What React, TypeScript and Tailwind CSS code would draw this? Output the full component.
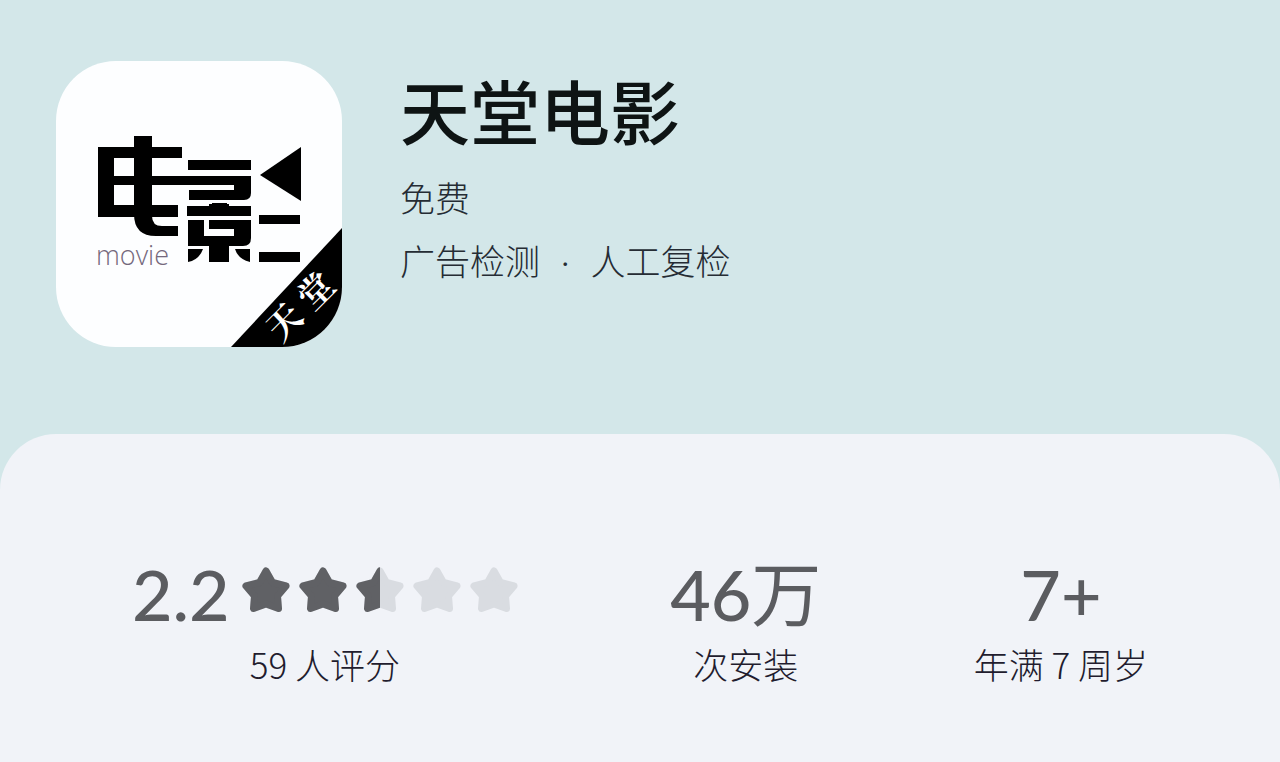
import { ReactNode } from 'react';

const STAR_PATH =
  'M24 5L30.5 16.5L44 20L35.5 30L36.5 42.5L24 38L11.5 42.5L12.5 30L4 20L17.5 16.5Z';

function Star({ fill }: { fill: number }) {
  return (
    <span className="relative block w-12 h-12">
      <svg viewBox="0 0 48 48" className="w-12 h-12 text-[#d9dce1]" aria-hidden="true">
        <path d={STAR_PATH} fill="currentColor" stroke="currentColor" strokeWidth="7" strokeLinejoin="round" />
      </svg>
      {/* Filled part */}
      <span className="absolute inset-y-0 left-0 overflow-hidden" style={{ width: `${fill * 100}%` }}>
        <svg viewBox="0 0 48 48" className="w-12 h-12 max-w-none text-[#606165]" aria-hidden="true">
          <path d={STAR_PATH} fill="currentColor" stroke="currentColor" strokeWidth="7" strokeLinejoin="round" />
        </svg>
      </span>
    </span>
  );
}

function AppIcon() {
  return (
    <div className="w-[286px] h-[286px] shrink-0 rounded-[60px] bg-[#fdfeff]">
      <svg viewBox="0 0 286 286" className="w-full h-full overflow-visible" role="img" aria-label="天堂电影">
        {/* Left half of the mark */}
        <rect x="42" y="86" width="84" height="11" />
        <rect x="42" y="86" width="16" height="70" />
        <rect x="42" y="115" width="100" height="9" />
        <rect x="42" y="144" width="80" height="12" />
        <path d="M78 75H96V155Q96 165 106 165H122V175H100Q78 175 78 153Z" />

        {/* Right half of the mark */}
        <rect x="132" y="99" width="63" height="10" />
        <path d="M130 115H195V132Q195 139 188 139H133V129H178V124H130Z" />
        <path d="M153 145V143H156V142H171V143H173V145H195V155H131V145Z" />
        <path d="M132 159H148V175H178V168H153V159H195V177Q195 185 187 185H173V201H153V185H132Z" />
        <path d="M132 188H147Q143 199 132 201Z" />
        <path d="M179 188H194V201Q182 198 179 188Z" />
        <path d="M204 114L245 86V140Z" />
        <rect x="203" y="154" width="41" height="9" />
        <rect x="203" y="191" width="41" height="10" />

        <text x="40" y="204" fill="#75687c" className="text-[27px] font-light font-['Open_Sans','Noto_Sans',sans-serif]">
          movie
        </text>

        {/* Corner ribbon */}
        <path d="M286 167V226A60 60 0 0 1 226 286H175Z" />
        <g
          fill="#ffffff"
          textAnchor="middle"
          className="text-[35px] font-bold font-['Noto_Serif_CJK_SC','Noto_Sans_CJK_SC',serif]"
        >
          <text transform="translate(237 270) rotate(-45)">天</text>
          <text transform="translate(269 239) rotate(-45)">堂</text>
        </g>
      </svg>
    </div>
  );
}

interface StatProps {
  value: ReactNode;
  label: string;
}

function Stat({ value, label }: StatProps) {
  return (
    <div className="flex flex-col items-center">
      <div className="flex h-20 items-center text-[70px] leading-[80px] font-medium text-[#5b5c60]">{value}</div>
      <p className="mt-1 text-[35px] leading-[52px] font-light text-[#221c2e] font-['Noto_Sans_CJK_SC',sans-serif]">
        {label}
      </p>
    </div>
  );
}

const rating = 2.5;

export default function App() {
  return (
    <div className="min-h-screen flex flex-col bg-[#d3e7e9] font-['Lato','Noto_Sans_CJK_SC',sans-serif]">
      {/* App header */}
      <header className="flex items-start gap-[58px] px-14 pt-[61px] pb-[87px]">
        <AppIcon />
        <div className="pt-1">
          <h1 className="text-[70px] leading-[96px] font-medium text-[#0e1414]">天堂电影</h1>
          <div className="mt-1.5 text-[35px] leading-[63px] font-light text-[#252c34]">
            <p>免费</p>
            <p>
              广告检测<span className="px-[21px]">·</span>人工复检
            </p>
          </div>
        </div>
      </header>

      {/* Stats */}
      <main className="flex-1 rounded-t-[56px] bg-[#f1f3f8] px-[132px] pt-[120px] pb-16">
        <div className="flex items-start justify-between">
          <Stat
            value={
              <>
                <span>2.2</span>
                <span className="flex gap-[9px] pl-3 pb-2" role="img" aria-label="2.2 / 5">
                  {[0, 1, 2, 3, 4].map((i) => (
                    <Star key={i} fill={Math.max(0, Math.min(1, rating - i))} />
                  ))}
                </span>
              </>
            }
            label="59 人评分"
          />
          <Stat
            value={
              <span>
                46<span className="font-normal">万</span>
              </span>
            }
            label="次安装"
          />
          <Stat value="7+" label="年满 7 周岁" />
        </div>
      </main>
    </div>
  );
}
